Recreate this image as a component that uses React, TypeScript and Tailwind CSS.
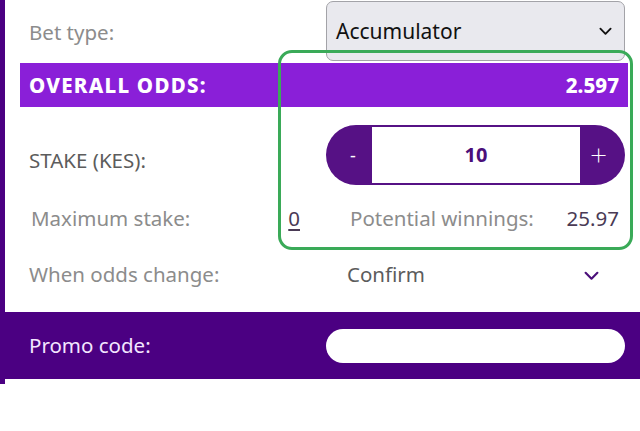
import React from 'react';

function Chevron({ className }: { className?: string }) {
  return (
    <svg viewBox="0 0 14 9" className={className} fill="none" stroke="currentColor" strokeWidth="2" strokeLinecap="round" strokeLinejoin="round">
      <path d="M1.5 1.5 L7 7 L12.5 1.5" />
    </svg>
  );
}

export default function App() {
  return (
    <div className="relative w-[640px] h-[431px] bg-white overflow-hidden font-['Noto_Sans',sans-serif] text-[20.5px]">
      <div className="border-l-[5px] border-[#4b0082] pb-[5px]">
        {/* bet type */}
        <div className="flex h-[62px]">
          <div className="w-[321px] pl-6 pt-[19px] leading-[26px] text-[#8c8c8c]">Bet type:</div>
          <div className="mt-[1px] h-[60px] w-[299px] rounded-[7px] border border-[#a3a3a8] bg-[#e9e9ee] flex items-center justify-between pl-[9px] pr-[12px]">
            <span className="text-[21px] text-[#111] pt-[2px]">Accumulator</span>
            <Chevron className="w-[13px] h-[9px] text-[#111]" />
          </div>
        </div>

        {/* overall odds */}
        <div className="ml-[15px] mt-[1px] w-[608px] h-[44px] bg-[#8a1fd8] flex items-center justify-between pl-[9px] pr-[9px] text-white font-extrabold text-[20.5px]">
          <span className="tracking-[0.06em]">OVERALL ODDS:</span>
          <span>2.597</span>
        </div>

        {/* stake */}
        <div className="flex items-center mt-[18px] h-[60px]">
          <div className="w-[321px] pl-6 pt-[10px] text-[#5c5c5c]">STAKE (KES):</div>
          <div className="w-[299px] h-[60px] rounded-full overflow-hidden flex">
            <button className="w-[46px] h-full bg-[#561185] text-white text-[18px] pl-2">-</button>
            <div className="flex-1 h-full bg-white border-y-2 border-[#561185] flex items-center justify-center text-[#4b0f7a] font-bold text-[20px]">10</div>
            <button className="w-[45px] h-full bg-[#561185] text-white text-[30px] font-extralight pr-2 leading-none">+</button>
          </div>
        </div>

        {/* max stake / potential winnings */}
        <div className="flex items-center mt-[19px] h-[28px]">
          <div className="w-[321px] pl-[26px] flex justify-between pr-[26px]">
            <span className="text-[#8c8c8c]">Maximum stake:</span>
            <span className="text-[#4a3a55] underline underline-offset-[3px]">0</span>
          </div>
          <div className="w-[299px] pl-[24px] pr-[6px] flex justify-between">
            <span className="text-[#8c8c8c]">Potential winnings:</span>
            <span className="text-[#4a3a55]">25.97</span>
          </div>
        </div>

        {/* when odds change */}
        <div className="flex items-center mt-[28px] h-[28px]">
          <div className="w-[321px] pl-6 text-[#8c8c8c]">When odds change:</div>
          <div className="w-[299px] pl-[21px] pr-[26px] flex items-center justify-between">
            <span className="text-[#5c5c5c]">Confirm</span>
            <Chevron className="w-[15px] h-[10px] text-[#4b0f7a] mt-1" />
          </div>
        </div>

        {/* promo */}
        <div className="mt-[24px] h-[67px] bg-[#4b0082] flex items-center">
          <div className="w-[321px] pl-6 text-[#f3e6ff]">Promo code:</div>
          <input className="w-[299px] h-[34px] rounded-full bg-white outline-none px-4" />
        </div>
      </div>

      {/* highlight frame */}
      <div className="absolute left-[278px] top-[50px] w-[355px] h-[200px] rounded-[14px] border-[3px] border-[#3aaa58] pointer-events-none" />
    </div>
  );
}
